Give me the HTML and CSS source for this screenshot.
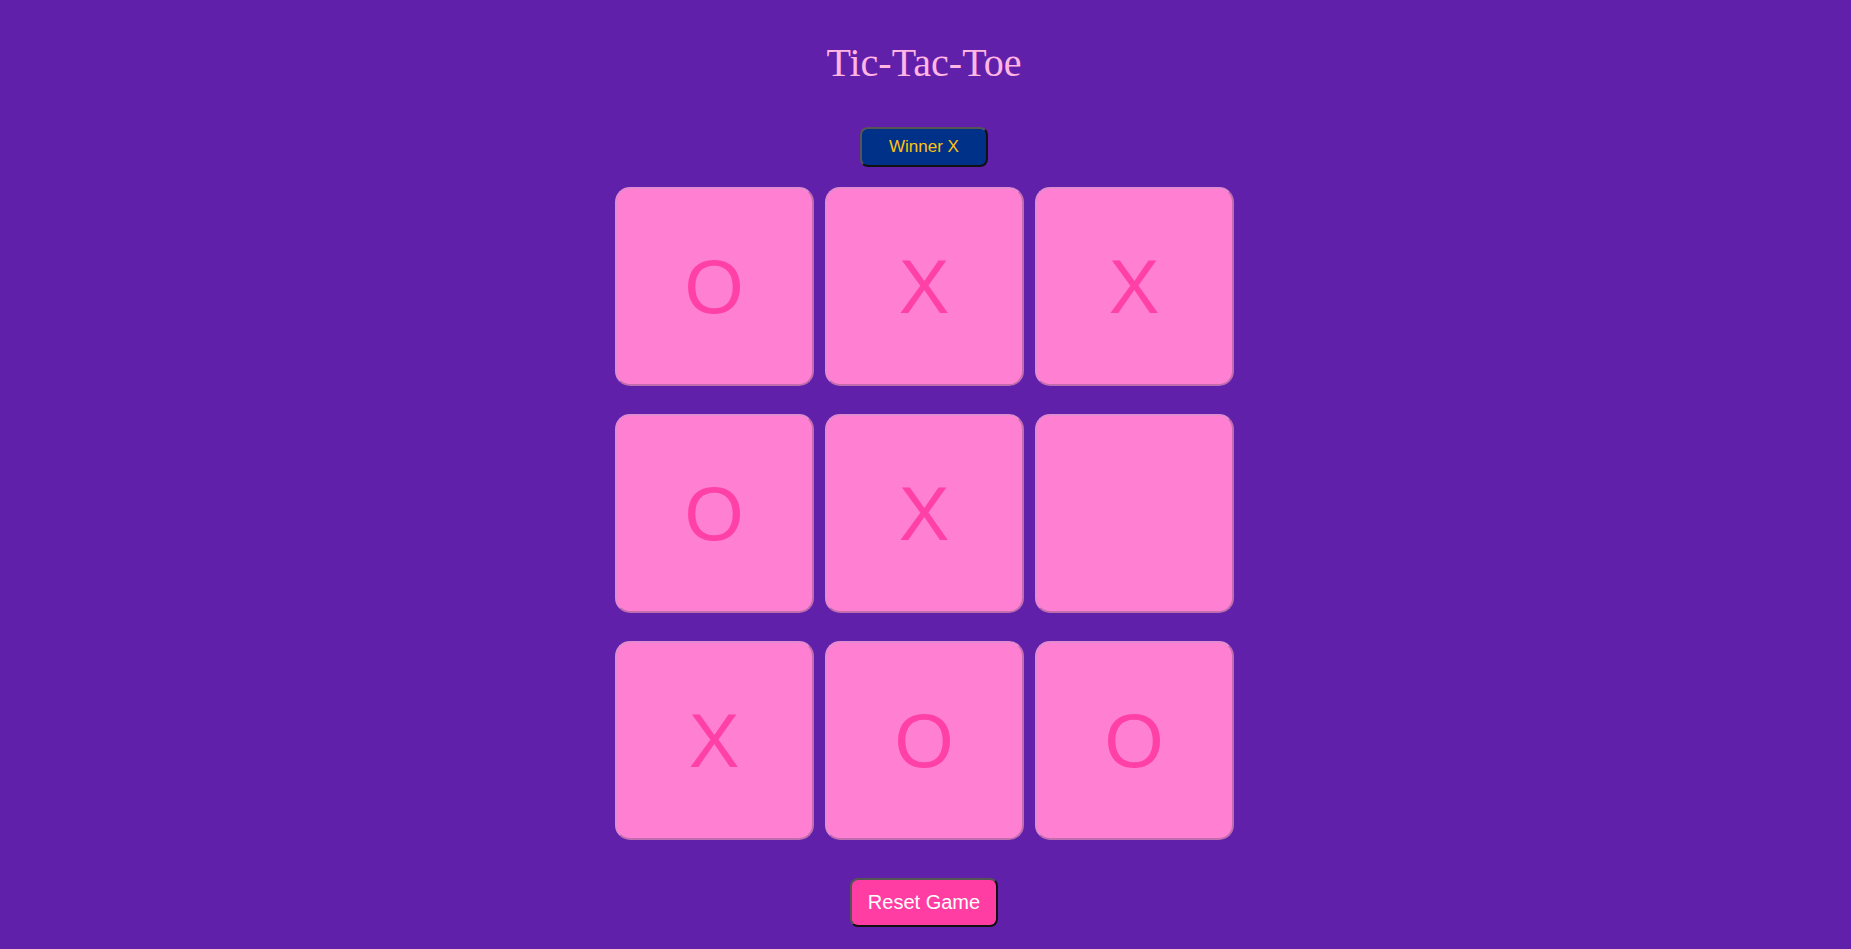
FILE: index.html
```html
<!DOCTYPE html>
<html lang="en">
<head>
<meta charset="utf-8">
<title>Tic-Tac-Toe</title>
<link rel="stylesheet" href="styles.css">
</head>
<body>
<main class="page">
  <h1 class="title">Tic-Tac-Toe</h1>
  <button class="winner">Winner X</button>
  <div class="board">
    <button class="cell">O</button>
    <button class="cell">X</button>
    <button class="cell">X</button>
    <button class="cell">O</button>
    <button class="cell">X</button>
    <button class="cell"></button>
    <button class="cell">X</button>
    <button class="cell">O</button>
    <button class="cell">O</button>
  </div>
  <button class="reset">Reset Game</button>
</main>
</body>
</html>
```

FILE: styles.css
```css
html, body {
  margin: 0;
  padding: 0;
  background: #6120aa;
  height: 100%;
  overflow: hidden;
}

.page {
  display: flex;
  flex-direction: column;
  align-items: center;
  padding-top: 40px;
  padding-right: 3px;
}

.title {
  margin: 0;
  font-family: "Liberation Serif", "Times New Roman", serif;
  font-weight: normal;
  font-size: 40px;
  line-height: 46px;
  color: #ffb6e4;
}

.winner {
  margin-top: 41px;
  width: 128px;
  height: 40px;
  background: #003189;
  color: #ffc20e;
  font-family: "Liberation Sans", Arial, sans-serif;
  font-size: 17px;
  border: 2px solid;
  border-color: #555 #111 #111 #555;
  border-radius: 8px;
  padding: 0;
}

.board {
  margin-top: 20px;
  display: grid;
  grid-template-columns: repeat(3, 199px);
  grid-auto-rows: 199px;
  column-gap: 11px;
  row-gap: 28px;
}

.cell {
  box-sizing: border-box;
  width: 199px;
  height: 199px;
  padding: 0;
  background: #ff80d2;
  color: #ff40a6;
  font-family: "Liberation Sans", Arial, sans-serif;
  font-size: 76px;
  border: 2px solid;
  border-color: #e58ad0 #c06cae #c06cae #e58ad0;
  border-radius: 15px;
}

.reset {
  margin-top: 38px;
  width: 148px;
  height: 49px;
  padding: 0;
  background: #ff3da2;
  color: #ffffff;
  font-family: "Liberation Sans", Arial, sans-serif;
  font-size: 20px;
  border: 2px solid;
  border-color: #555 #111 #111 #555;
  border-radius: 8px;
}
```
